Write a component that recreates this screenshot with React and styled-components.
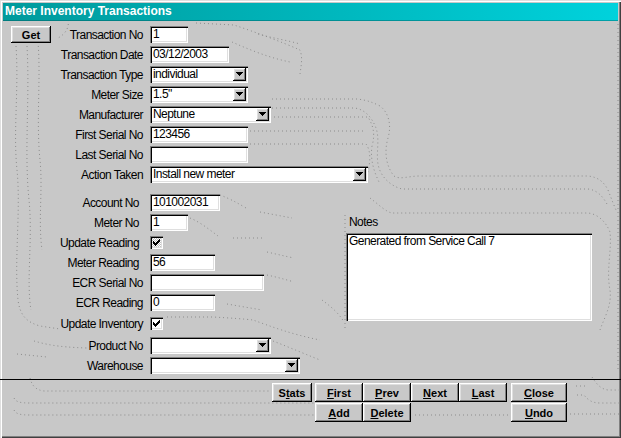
import React from 'react';
import styled, { createGlobalStyle } from 'styled-components';

const FACE = '#c8c8c8';

const GlobalStyle = createGlobalStyle`
  html, body { margin: 0; padding: 0; background: ${FACE}; }
  body { font-family: "Liberation Sans", Arial, sans-serif; }
  * { box-sizing: border-box; }
`;

const Window = styled.div`
  position: relative;
  width: 621px;
  height: 438px;
  padding: 3px;
  background: ${FACE};
  box-shadow: inset 1px 1px #dfdfdf, inset 2px 2px #ffffff,
    inset -1px -1px #404040, inset -2px -2px #808080;
  display: flex;
  flex-direction: column;
  overflow: hidden;
`;

const Backdrop = styled.svg`
  position: absolute;
  left: 0;
  top: 0;
  width: 621px;
  height: 438px;
  pointer-events: none;
  z-index: 0;
`;

const TitleBar = styled.div`
  position: relative;
  z-index: 1;
  height: 18px;
  padding: 1px 0 0 2px;
  line-height: 17px;
  font: bold 12px "Liberation Sans", Arial, sans-serif;
  color: #ffffff;
  background: linear-gradient(90deg, #009a9c 0%, #00b8be 55%, #00d2dc 100%);
  box-shadow: inset 0 -1px rgba(0, 70, 72, 0.35);
  white-space: nowrap;
`;

const Content = styled.div`
  position: relative;
  z-index: 1;
  flex: 1;
  display: flex;
  flex-direction: column;
`;

const FormArea = styled.div`
  display: flex;
  padding-top: 5px;
`;

const FieldColumn = styled.div`
  width: 343px;
  flex-shrink: 0;
  display: flex;
  flex-direction: column;
`;

const Row = styled.div`
  display: flex;
  align-items: center;
  height: 17px;
  margin-top: ${p => (p.$mt === undefined ? 3 : p.$mt)}px;
  & > * { flex-shrink: 0; }
`;

const LabelCell = styled.div`
  width: 140px;
  margin-right: 7px;
  padding-right: ${p => p.$shift || 0}px;
  display: flex;
  align-items: center;
  justify-content: ${p => (p.$withButton ? 'space-between' : 'flex-end')};
  padding-left: ${p => (p.$withButton ? 8 : 0)}px;
  font-size: 12px;
  letter-spacing: -0.55px;
  color: #000;
  white-space: nowrap;
`;

const sunken = `
  box-shadow: inset 1px 1px #808080, inset 2px 2px #000000,
    inset -1px -1px #ffffff, inset -2px -2px #dfdfdf;
`;

const raised = `
  box-shadow: inset -1px -1px #000000, inset 1px 1px #ffffff,
    inset -2px -2px #808080, inset 2px 2px #dfdfdf;
`;

const TextBox = styled.div`
  width: ${p => p.$w}px;
  height: 17px;
  padding: 0 3px;
  background: #ffffff;
  ${sunken}
  font-size: 12px;
  letter-spacing: -0.55px;
  line-height: 17px;
  color: #000;
  white-space: nowrap;
  overflow: hidden;
`;

const ComboBox = styled.div`
  width: ${p => p.$w}px;
  height: 17px;
  padding: 2px 2px 2px 3px;
  background: #ffffff;
  ${sunken}
  display: flex;
  align-items: center;
  font-size: 12px;
  letter-spacing: -0.55px;
  color: #000;
  white-space: nowrap;
`;

const ComboText = styled.span`
  flex: 1;
  line-height: 13px;
  overflow: hidden;
`;

const DropButton = styled.span`
  width: 13px;
  height: 13px;
  background: ${FACE};
  ${raised}
  display: flex;
  align-items: center;
  justify-content: center;
  padding-bottom: 1px;
`;

const CheckBox = styled.span`
  width: 13px;
  height: 13px;
  ${sunken}
  background: ${p =>
    p.$grayed
      ? `repeating-conic-gradient(#ffffff 0 25%, #c0c0c0 0 50%) 0 0 / 2px 2px`
      : '#ffffff'};
  display: flex;
  align-items: center;
  justify-content: center;
`;

const WinButton = styled.button`
  width: ${p => p.$w || 48}px;
  height: ${p => p.$h || 19}px;
  padding: 0;
  border: 0;
  background: ${FACE};
  ${raised}
  font: bold 11px "Liberation Sans", Arial, sans-serif;
  color: #000;
  grid-column: ${p => p.$col};
  grid-row: ${p => p.$row || 1};
  u { text-decoration: underline; }
`;

const NotesPanel = styled.div`
  margin-top: 188px;
  display: flex;
  flex-direction: column;
`;

const NotesLabel = styled.div`
  height: 17px;
  line-height: 17px;
  padding-left: 3px;
  font-size: 12px;
  letter-spacing: -0.55px;
`;

const NotesBox = styled.div`
  margin-top: 2px;
  width: 246px;
  height: 88px;
  padding: 2px 3px;
  background: #ffffff;
  ${sunken}
  font-size: 12px;
  letter-spacing: -0.55px;
  line-height: 13px;
`;

const Separator = styled.div`
  margin: 5px -3px 0;
  height: 1px;
  background: #000;
`;

const ButtonGrid = styled.div`
  margin-top: 3px;
  padding-left: 269px;
  display: grid;
  grid-template-columns: 40px 3px 48px 48px 48px 48px 4px 56px;
  grid-template-rows: 19px 19px;
  row-gap: 1px;
`;

const Arrow = () => (
  <svg width="7" height="4" viewBox="0 0 7 4" shapeRendering="crispEdges">
    <polygon points="0,0 7,0 3.5,4" fill="#000" />
  </svg>
);

const Check = () => (
  <svg width="7" height="7" viewBox="0 0 7 7" shapeRendering="crispEdges">
    <path d="M0 2 L2 4 L7 -1 L7 2 L2 7 L0 5 Z" fill="#000" />
  </svg>
);

const Combo = ({ w, value }) => (
  <ComboBox $w={w}>
    <ComboText>{value}</ComboText>
    <DropButton>
      <Arrow />
    </DropButton>
  </ComboBox>
);

const dots = [
  'M16 46 C19 90 13 130 17 170 C21 210 14 260 18 300 C20 315 26 322 40 326 L60 329',
  'M27 46 C30 100 24 150 29 200 C33 240 26 280 31 310',
  'M38 42 C41 80 36 120 40 160 C43 190 38 220 42 250',
  'M34 341 C45 344 55 347 87 348',
  'M17 354 L47 357',
  'M196 23 L234 25 C255 32 282 42 300 50 C303 58 301 66 300 74',
  'M258 34 C272 38 286 40 300 44',
  'M232 42 C250 50 270 58 290 62',
  'M272 99 L357 99 C366 100 372 102 380 106 C388 112 392 124 388 138 C384 152 386 166 394 176 C400 180 408 176 420 176 L588 176 C598 177 604 182 608 190 C612 200 614 206 617 212',
  'M272 108 L355 108 C366 110 372 118 376 128 C380 140 376 152 378 164 C380 176 390 186 402 189 L588 189 C598 190 604 198 608 206',
  'M250 117 L368 117 C372 124 376 132 372 146 C370 160 374 172 380 184',
  'M250 131 L366 131',
  'M250 144 L366 144 C372 152 370 166 366 178',
  'M370 198 C378 204 386 212 392 213 L588 213 C598 214 606 222 610 232 C612 250 606 270 610 290 C612 306 604 318 600 330',
  'M345 215 L345 330',
  'M322 300 C330 306 338 312 344 322',
  'M618 24 L618 372',
  'M190 218 C200 222 210 230 218 236',
  'M220 195 C228 198 236 202 246 208',
  'M260 212 L292 218',
  'M233 238 L262 238',
  'M267 252 C276 254 284 256 294 258',
  'M267 275 C276 277 284 279 294 282',
  'M227 304 L262 310',
  'M167 317 L213 317 C230 318 245 319 253 320 C270 326 290 334 320 340',
  'M273 341 C286 346 300 352 320 360',
  'M68 20 C70 30 62 36 58 38',
  'M30 378 C32 386 36 390 44 391 L270 391',
  'M14 398 C16 402 20 403 30 403 L314 403',
  'M14 410 C16 414 20 415 30 415 L314 415',
  'M415 415 L508 415',
  'M592 377 C596 383 600 389 608 390 L620 390',
  'M576 386 L586 386',
  'M577 395 L584 395 C588 400 592 403 600 403 L620 403',
  'M570 414 L620 414',
];

export default function App() {
  return (
    <>
      <GlobalStyle />
      <Window>
        <Backdrop viewBox="0 0 621 438">
          {dots.map((d, i) => (
            <path
              key={i}
              d={d}
              fill="none"
              stroke="#8c8c8c"
              strokeWidth="1"
              strokeDasharray="1 3"
            />
          ))}
        </Backdrop>
        <TitleBar>Meter Inventory Transactions</TitleBar>
        <Content>
          <FormArea>
            <FieldColumn>
              <Row $mt={0}>
                <LabelCell $withButton>
                  <WinButton $w={40} $h={17}>Get</WinButton>
                  <span>Transaction No</span>
                </LabelCell>
                <TextBox $w={38}>1</TextBox>
              </Row>
              <Row>
                <LabelCell>Transaction Date</LabelCell>
                <TextBox $w={79}>03/12/2003</TextBox>
              </Row>
              <Row>
                <LabelCell>Transaction Type</LabelCell>
                <Combo w={98} value="individual" />
              </Row>
              <Row>
                <LabelCell>Meter Size</LabelCell>
                <Combo w={98} value={'1.5"'} />
              </Row>
              <Row>
                <LabelCell>Manufacturer</LabelCell>
                <Combo w={121} value="Neptune" />
              </Row>
              <Row>
                <LabelCell>First Serial No</LabelCell>
                <TextBox $w={98}>123456</TextBox>
              </Row>
              <Row>
                <LabelCell>Last Serial No</LabelCell>
                <TextBox $w={98} />
              </Row>
              <Row>
                <LabelCell>Action Taken</LabelCell>
                <Combo w={218} value="Install new meter" />
              </Row>
              <Row $mt={11}>
                <LabelCell $shift={4}>Account No</LabelCell>
                <TextBox $w={70}>101002031</TextBox>
              </Row>
              <Row>
                <LabelCell $shift={4}>Meter No</LabelCell>
                <TextBox $w={38}>1</TextBox>
              </Row>
              <Row>
                <LabelCell $shift={4}>Update Reading</LabelCell>
                <CheckBox $grayed>
                  <Check />
                </CheckBox>
              </Row>
              <Row>
                <LabelCell $shift={4}>Meter Reading</LabelCell>
                <TextBox $w={65}>56</TextBox>
              </Row>
              <Row>
                <LabelCell>ECR Serial No</LabelCell>
                <TextBox $w={114} />
              </Row>
              <Row>
                <LabelCell>ECR Reading</LabelCell>
                <TextBox $w={65}>0</TextBox>
              </Row>
              <Row $mt={4}>
                <LabelCell>Update Inventory</LabelCell>
                <CheckBox>
                  <Check />
                </CheckBox>
              </Row>
              <Row $mt={5}>
                <LabelCell>Product No</LabelCell>
                <Combo w={121} value="" />
              </Row>
              <Row>
                <LabelCell>Warehouse</LabelCell>
                <Combo w={150} value="" />
              </Row>
            </FieldColumn>
            <NotesPanel>
              <NotesLabel>Notes</NotesLabel>
              <NotesBox>Generated from Service Call 7</NotesBox>
            </NotesPanel>
          </FormArea>
          <Separator />
          <ButtonGrid>
            <WinButton $w={40} $col={1}>S<u>t</u>ats</WinButton>
            <WinButton $col={3}><u>F</u>irst</WinButton>
            <WinButton $col={4}><u>P</u>rev</WinButton>
            <WinButton $col={5}><u>N</u>ext</WinButton>
            <WinButton $col={6}><u>L</u>ast</WinButton>
            <WinButton $w={56} $col={8}><u>C</u>lose</WinButton>
            <WinButton $col={3} $row={2}><u>A</u>dd</WinButton>
            <WinButton $col={4} $row={2}><u>D</u>elete</WinButton>
            <WinButton $w={56} $col={8} $row={2}><u>U</u>ndo</WinButton>
          </ButtonGrid>
        </Content>
      </Window>
    </>
  );
}
